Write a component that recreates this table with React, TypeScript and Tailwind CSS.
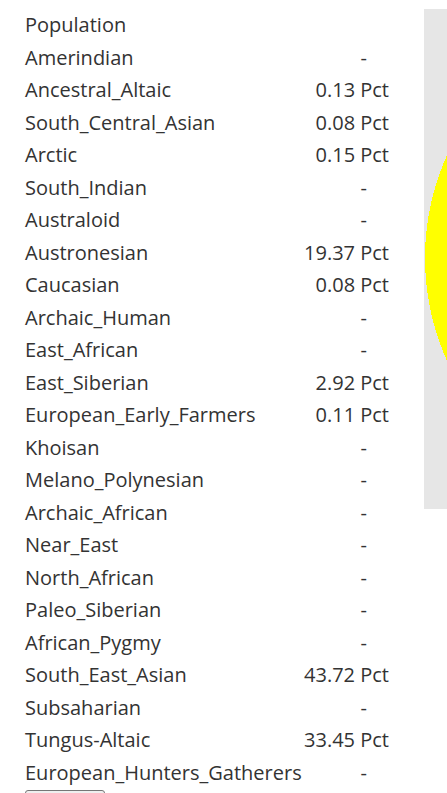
const rows: [string, string][] = [
  ["Amerindian", "-"],
  ["Ancestral_Altaic", "0.13 Pct"],
  ["South_Central_Asian", "0.08 Pct"],
  ["Arctic", "0.15 Pct"],
  ["South_Indian", "-"],
  ["Australoid", "-"],
  ["Austronesian", "19.37 Pct"],
  ["Caucasian", "0.08 Pct"],
  ["Archaic_Human", "-"],
  ["East_African", "-"],
  ["East_Siberian", "2.92 Pct"],
  ["European_Early_Farmers", "0.11 Pct"],
  ["Khoisan", "-"],
  ["Melano_Polynesian", "-"],
  ["Archaic_African", "-"],
  ["Near_East", "-"],
  ["North_African", "-"],
  ["Paleo_Siberian", "-"],
  ["African_Pygmy", "-"],
  ["South_East_Asian", "43.72 Pct"],
  ["Subsaharian", "-"],
  ["Tungus-Altaic", "33.45 Pct"],
  ["European_Hunters_Gatherers", "-"],
];

export default function App() {
  return (
    <div
      className="w-[447px] h-[793px] overflow-hidden bg-white text-[#333] text-[20px]"
      style={{ fontFamily: '"Open Sans", sans-serif' }}
    >
      <div className="flex items-start pt-[9px]">
        <div className="w-[424px] pl-[25px] shrink-0">
          <div className="w-[364px]">
            <div className="h-[32.5px] flex items-center">Population</div>
            {rows.map(([name, value]) => (
              <div key={name} className="h-[32.5px] flex items-center justify-between whitespace-nowrap">
                <span>{name}</span>
                <span className={value === "-" ? "pr-[22px]" : ""}>{value}</span>
              </div>
            ))}
          </div>
          <button className="mt-[1px] w-[80px] h-[30px] border border-[#767676] rounded-[3px] bg-[#efefef]" />
        </div>
        {/* chart panel */}
        <div className="w-[500px] h-[500px] shrink-0 bg-[#e6e6e6]">
          <svg width="500" height="500" viewBox="0 0 500 500" shapeRendering="crispEdges">
            <circle cx="252" cy="249" r="251" fill="#ffff00" />
          </svg>
        </div>
      </div>
    </div>
  );
}
